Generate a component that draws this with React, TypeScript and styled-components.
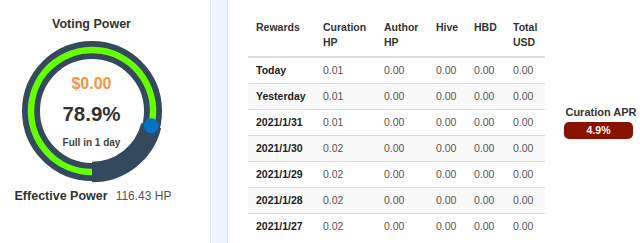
import React from 'react';
import styled, {createGlobalStyle} from "styled-components";

const GlobalStyle = createGlobalStyle`
    body {
        margin: 0;
        background: #fff;
        font-family: "Liberation Sans", Arial, sans-serif;
        color: #333;
    }
`;

const Page = styled.div`
    display: flex;
    width: 640px;
    height: 243px;
    overflow: hidden;
`;

const LeftPanel = styled.div`
    flex-shrink: 0;
    width: 210px;
    box-sizing: border-box;
    padding: 16px 27px 0 0;
    display: flex;
    flex-direction: column;
    align-items: center;
`;

const PanelTitle = styled.div`
    font-size: 12.5px;
    font-weight: bold;
    line-height: 16px;
    color: #333;
`;

const GaugeWrap = styled.div`
    position: relative;
    width: 144px;
    height: 144px;
    margin-top: 7px;
`;

const GaugeText = styled.div`
    position: absolute;
    inset: 0;
    display: flex;
    flex-direction: column;
    align-items: center;
    padding-top: 35px;
    box-sizing: border-box;
`;

const Amount = styled.div`
    font-size: 16px;
    font-weight: bold;
    line-height: 20px;
    color: #f7943c;
`;

const Percent = styled.div`
    margin-top: 7px;
    font-size: 20.5px;
    font-weight: bold;
    line-height: 26px;
    color: #333;
`;

const FullIn = styled.div`
    margin-top: 8px;
    font-size: 10px;
    font-weight: bold;
    line-height: 16px;
    color: #444;
`;

const PowerRow = styled.div`
    display: flex;
    gap: 8px;
    margin-top: 5px;
    padding-left: 3px;
    line-height: 16px;
    white-space: nowrap;
`;

const PowerLabel = styled.span`
    font-size: 12.5px;
    font-weight: bold;
    color: #333;
`;

const PowerValue = styled.span`
    font-size: 12px;
    color: #555;
`;

const Divider = styled.div`
    flex-shrink: 0;
    width: 18px;
    box-sizing: border-box;
    background: #eef5fc;
    border-left: 1px solid #dde8f3;
    border-right: 1px solid #d3dee9;
`;

const Main = styled.div`
    flex-shrink: 0;
    display: flex;
    align-items: center;
    padding-left: 20px;
`;

const Table = styled.table`
    flex-shrink: 0;
    width: 297px;
    table-layout: fixed;
    border-collapse: collapse;
    font-size: 10.5px;
    align-self: flex-start;
    margin-top: 14px;
`;

const Th = styled.th<{ $w: number }>`
    box-sizing: border-box;
    width: ${p => p.$w}px;
    height: 42px;
    text-align: left;
    vertical-align: top;
    padding: 6px 8px;
    line-height: 15px;
    font-weight: bold;
    color: #333;
    border-bottom: 2px solid #ddd;
`;

const Row = styled.tr<{ $striped: boolean }>`
    background: ${p => (p.$striped ? '#f9f9f9' : 'transparent')};
`;

const Td = styled.td<{ $head?: boolean }>`
    padding: 6px 8px;
    line-height: 13px;
    border-top: 1px solid #ddd;
    font-weight: ${p => (p.$head ? 'bold' : 'normal')};
    color: ${p => (p.$head ? '#222' : '#555')};
    white-space: nowrap;
`;

const Side = styled.div`
    flex-shrink: 0;
    width: 74px;
    margin-left: 19px;
    display: flex;
    flex-direction: column;
    align-items: flex-start;
`;

const SideLabel = styled.div`
    width: 74px;
    text-align: center;
    font-size: 11px;
    font-weight: bold;
    line-height: 14px;
    color: #333;
    white-space: nowrap;
`;

const AprBadge = styled.div`
    margin-top: 3px;
    width: 69px;
    height: 17px;
    border-radius: 5px;
    background: #881300;
    color: #fff;
    font-size: 10.5px;
    font-weight: bold;
    line-height: 17px;
    text-align: center;
`;

const columns = [
    {label: 'Rewards', w: 67},
    {label: 'Curation HP', w: 61},
    {label: 'Author HP', w: 52},
    {label: 'Hive', w: 38},
    {label: 'HBD', w: 39},
    {label: 'Total USD', w: 40},
];

const rows = [
    ['Today', '0.01', '0.00', '0.00', '0.00', '0.00'],
    ['Yesterday', '0.01', '0.00', '0.00', '0.00', '0.00'],
    ['2021/1/31', '0.01', '0.00', '0.00', '0.00', '0.00'],
    ['2021/1/30', '0.02', '0.00', '0.00', '0.00', '0.00'],
    ['2021/1/29', '0.02', '0.00', '0.00', '0.00', '0.00'],
    ['2021/1/28', '0.02', '0.00', '0.00', '0.00', '0.00'],
    ['2021/1/27', '0.02', '0.00', '0.00', '0.00', '0.00'],
];

// angle in degrees, clockwise from 12 o'clock
const pt = (c: number, r: number, deg: number) => {
    const a = deg * Math.PI / 180;
    return [c + r * Math.sin(a), c - r * Math.cos(a)];
};

const arc = (c: number, r: number, from: number, to: number) => {
    const [x1, y1] = pt(c, r, from);
    const [x2, y2] = pt(c, r, to);
    const large = to - from > 180 ? 1 : 0;
    return `M ${x1} ${y1} A ${r} ${r} 0 ${large} 1 ${x2} ${y2}`;
};

const Gauge = ({value}: { value: number }) => {
    const c = 72;
    const r = 61;
    const start = 180;
    const end = start + value * 360;
    const [dx, dy] = pt(c, r, end);
    return (
        <svg width="144" height="144" viewBox="0 0 144 144">
            <circle cx={c} cy={c} r={r} fill="none" stroke="#34495e" strokeWidth="18"/>
            <path d={arc(c, r, end, start + 360)} fill="none" stroke="#34495e" strokeWidth="20.5"/>
            <path d={arc(c, r, start, end)} fill="none" stroke="#66ff00" strokeWidth="6.5"/>
            <circle cx={dx} cy={dy} r="7.5" fill="#0a70c0"/>
        </svg>
    );
};

function App() {
    return (
        <Page>
            <GlobalStyle/>
            <LeftPanel>
                <PanelTitle>Voting Power</PanelTitle>
                <GaugeWrap>
                    <Gauge value={0.789}/>
                    <GaugeText>
                        <Amount>$0.00</Amount>
                        <Percent>78.9%</Percent>
                        <FullIn>Full in 1 day</FullIn>
                    </GaugeText>
                </GaugeWrap>
                <PowerRow>
                    <PowerLabel>Effective Power</PowerLabel>
                    <PowerValue>116.43 HP</PowerValue>
                </PowerRow>
            </LeftPanel>
            <Divider/>
            <Main>
                <Table>
                    <thead>
                    <tr>
                        {columns.map(col => (
                            <Th key={col.label} $w={col.w}>{col.label}</Th>
                        ))}
                    </tr>
                    </thead>
                    <tbody>
                    {rows.map((row, i) => (
                        <Row key={row[0]} $striped={i % 2 === 1}>
                            {row.map((cell, j) => (
                                <Td key={j} $head={j === 0}>{cell}</Td>
                            ))}
                        </Row>
                    ))}
                    </tbody>
                </Table>
                <Side>
                    <SideLabel>Curation APR</SideLabel>
                    <AprBadge>4.9%</AprBadge>
                </Side>
            </Main>
        </Page>
    );
}

export default App;
